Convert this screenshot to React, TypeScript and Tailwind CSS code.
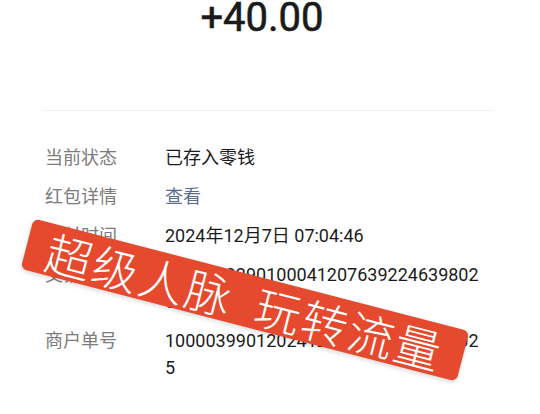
const rows: { label: string; value: string; link?: boolean }[] = [
  { label: "当前状态", value: "已存入零钱" },
  { label: "红包详情", value: "查看", link: true },
  { label: "支付时间", value: "2024年12月7日 07:04:46" },
  { label: "交易单号", value: "10000392901000412076392246398025" },
  { label: "商户单号", value: "10000399012024120700041262398025" },
];

const App: React.FC = () => {
  return (
    <div
      className="relative w-[540px] h-[414px] overflow-hidden bg-white"
      style={{ fontFamily: 'Roboto, "Noto Sans CJK SC", sans-serif' }}
    >
      <div className="flex justify-center pr-4 text-[40px] leading-[36px] font-normal text-[#1a1a1a] [-webkit-text-stroke:0.6px_#1a1a1a]">
        +40.00
      </div>

      <div className="mt-[74px] ml-[43px] w-[450px] h-px bg-[#f1f1f1]" />

      <div className="mt-[33px] flex flex-col gap-3 text-[18px] leading-[27px]">
        {rows.map((r) => (
          <div key={r.label} className="flex">
            <div className="w-[165px] pl-[45px] shrink-0 text-[#7c7c7c]">{r.label}</div>
            <div className={`w-[318px] break-all ${r.link ? "text-[#576b95]" : "text-[#1b1b1b]"}`}>{r.value}</div>
          </div>
        ))}
      </div>

      <div
        className="absolute left-[20px] top-[274px] w-[450px] h-[52px] rotate-[14.5deg] rounded-md bg-[#e64a2e] shadow-[0_2px_4px_rgba(0,0,0,0.15)] flex items-center justify-center gap-[24px] text-white text-[46px] font-light leading-none"
        style={{ fontFamily: '"Noto Sans CJK SC", serif' }}
      >
        <span className="tracking-[2px]">超级人脉</span>
        <span className="tracking-[2px]">玩转流量</span>
      </div>
    </div>
  );
};

export default App;
